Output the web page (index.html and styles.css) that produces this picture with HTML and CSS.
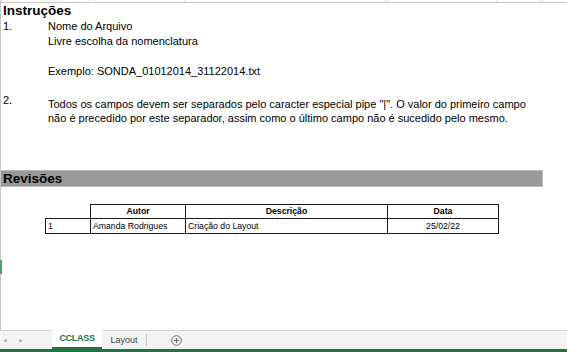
FILE: index.html
```html
<!DOCTYPE html>
<html lang="pt">
<head>
<meta charset="utf-8">
<title>CCLASS</title>
<link rel="stylesheet" href="styles.css">
</head>
<body>
<div class="app">
  <div class="sheet">
    <div class="colhead">
      <span class="ch c1"></span><span class="ch c2"></span><span class="ch c3"></span><span class="ch c4"></span><span class="ch c5"></span><span class="ch c6"></span><span class="ch c7"></span>
    </div>
    <h1 class="title">Instruções</h1>
    <div class="item item1">
      <span class="num">1.</span>
      <div class="body">
        <div class="line">Nome do Arquivo</div>
        <div class="line">Livre escolha da nomenclatura</div>
        <div class="line">&nbsp;</div>
        <div class="line">Exemplo: SONDA_01012014_31122014.txt</div>
      </div>
    </div>
    <div class="item item2">
      <span class="num">2.</span>
      <div class="body wrap">Todos os campos devem ser separados pelo caracter especial pipe "|". O valor do primeiro campo<br>não é precedido por este separador, assim como o último campo não é sucedido pelo mesmo.</div>
    </div>
    <h2 class="rev-bar">Revisões</h2>
    <table class="rev-table">
      <colgroup><col class="w1"><col class="w2"><col class="w3"><col class="w4"></colgroup>
      <thead>
        <tr><th class="blank"></th><th>Autor</th><th>Descrição</th><th>Data</th></tr>
      </thead>
      <tbody>
        <tr><td>1</td><td>Amanda Rodrigues</td><td>Criação do Layout</td><td class="center">25/02/22</td></tr>
      </tbody>
    </table>
  </div>
  <div class="tabbar">
    <div class="navs"><span class="arr">&#9664;</span><span class="arr">&#9654;</span></div>
    <div class="tab active">CCLASS</div>
    <div class="tab">Layout</div>
    <span class="sep"></span>
    <span class="add">
      <svg width="11" height="11" viewBox="0 0 11 11"><circle cx="5.5" cy="5.5" r="4.8" fill="none" stroke="#6d6d6d" stroke-width="1"/><path d="M5.5 3v5M3 5.5h5" stroke="#6d6d6d" stroke-width="1.2"/></svg>
    </span>
  </div>
  <div class="greenbar"></div>
</div>
</body>
</html>
```
FILE: styles.css
```css
html, body {
  margin: 0;
  padding: 0;
  background: #fff;
}
body {
  font-family: "Liberation Sans", Arial, sans-serif;
  color: #000;
  width: 567px;
  height: 352px;
  overflow: hidden;
}
.app {
  display: flex;
  flex-direction: column;
  height: 352px;
}
.sheet {
  position: relative;
  height: 330px;
  border-left: 1px solid #c6c6c6;
  box-sizing: border-box;
}
.sheet::before {
  content: "";
  position: absolute;
  left: -1px;
  top: 260px;
  width: 2px;
  height: 14px;
  background: #4c9e6c;
}
.colhead {
  display: grid;
  grid-template-columns: 44px 45px 95px 202px 110px 45px 1fr;
  height: 2px;
  border-bottom: 1px solid #c8c8c8;
}
.ch {
  border-right: 1px solid #dadada;
}
.ch.c7 { border-right: none; }
.title {
  margin: 0;
  padding-left: 2px;
  font-size: 13.5px;
  font-weight: bold;
  line-height: 16px;
  height: 16px;
}
.item {
  display: flex;
  font-size: 11px;
}
.num {
  width: 44px;
  padding-left: 2px;
  box-sizing: border-box;
  line-height: 15px;
}
.body {
  padding-left: 3px;
}
.line {
  line-height: 15px;
  height: 15px;
  white-space: nowrap;
}
.item2 {
  margin-top: 14px;
}
.wrap {
  padding-top: 3.5px;
  line-height: 14.5px;
  white-space: nowrap;
}
.rev-bar {
  margin: 44px 0 0 0;
  width: 542px;
  height: 17px;
  box-sizing: border-box;
  background: #999999;
  border: 1px solid #b9b9b9;
  border-left: none;
  padding-left: 2px;
  font-size: 13.5px;
  font-weight: bold;
  line-height: 15px;
}
.rev-table {
  margin: 17px 0 0 44px;
  border-collapse: collapse;
  table-layout: fixed;
  width: 453px;
  font-size: 8.7px;
}
.w1 { width: 45px; }
.w2 { width: 95px; }
.w3 { width: 202px; }
.w4 { width: 111px; }
.rev-table th, .rev-table td {
  border: 1px solid #1a1a1a;
  padding: 0 2px;
  white-space: nowrap;
  overflow: hidden;
}
.rev-table th {
  height: 13px;
  line-height: 13px;
  font-weight: bold;
  text-align: center;
}
.rev-table th.blank {
  border-top: none;
  border-left: none;
}
.rev-table td {
  height: 14px;
  line-height: 14px;
  text-align: left;
}
.rev-table td.center { text-align: center; }
.tabbar {
  display: flex;
  align-items: stretch;
  height: 19px;
  box-sizing: border-box;
  border-top: 1px solid #d2d2d2;
  background: #f3f3f3;
  font-family: "Liberation Sans", Arial, sans-serif;
}
.navs {
  width: 52px;
  display: flex;
  align-items: center;
  gap: 12px;
  padding-left: 3px;
  box-sizing: border-box;
}
.arr {
  font-size: 5px;
  color: #b5b5b5;
}
.tab {
  display: flex;
  align-items: center;
  justify-content: center;
  font-size: 9px;
  color: #444;
  box-sizing: border-box;
}
.tab.active {
  width: 50px;
  margin-top: -2px;
  background: #fff;
  color: #217346;
  font-weight: bold;
  border-bottom: 2px solid #217346;
  letter-spacing: -0.3px;
}
.tab:not(.active) {
  width: 44px;
}
.sep {
  width: 1px;
  margin: 3px 0;
  background: #c6c6c6;
}
.add {
  display: flex;
  align-items: center;
  margin-left: 24px;
}
.greenbar {
  height: 3px;
  background: #217346;
}
```
